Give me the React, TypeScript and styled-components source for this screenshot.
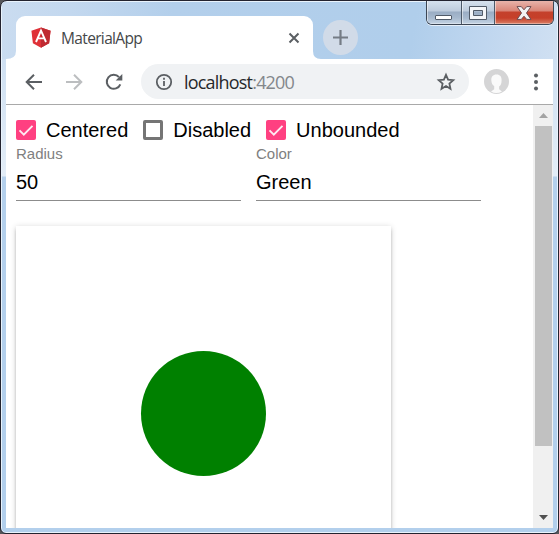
import React from 'react';
import styled, { createGlobalStyle } from 'styled-components';

const GlobalStyle = createGlobalStyle`
  * { box-sizing: border-box; }
  body { margin: 0; background: #55565a; overflow: hidden; }
  svg { display: block; flex: none; }
`;

const Window = styled.div`
  width: 559px;
  height: 534px;
  display: flex;
  flex-direction: column;
  position: relative;
  overflow: hidden;
  padding: 1px 5px 4px;
  border: 1px solid #23232f;
  border-radius: 7px 7px 6px 6px;
  box-shadow: inset 0 0 0 1px #e9f3fc;
  background: linear-gradient(180deg, #cfe0f2 0, #cfe0f2 60px, #e3edf7 175px, #b4d0ec 176px, #b2cfec 100%);
`;

const TabStrip = styled.header`
  height: 57px;
  flex: none;
  margin: 0 -4px;
  padding-top: 14px;
  display: flex;
  align-items: flex-start;
  background: linear-gradient(100deg, #cadcf0 0, #c3d8ef 70px, #b3cfeb 170px, #b0ceeb 410px, #bfd6ef 480px, #d0e0f2 100%);
`;

const TabFoot = styled.svg`
  margin-top: 35px;
`;

const Tab = styled.div`
  width: 297px;
  height: 43px;
  display: flex;
  align-items: center;
  padding: 0 13px 0 15px;
  border-radius: 9px 9px 0 0;
  background: #fff;
`;

const TabTitle = styled.span`
  flex: 1;
  margin-left: 10px;
  font: 15.5px/22px 'Open Sans', sans-serif;
  letter-spacing: -0.65px;
  color: #45474a;
`;

const NewTab = styled.div`
  width: 35px;
  height: 35px;
  margin: 4px 0 0 2px;
  border-radius: 50%;
  display: grid;
  place-items: center;
  background: #d1dbe8;
`;

const Captions = styled.div`
  position: absolute;
  top: 0;
  right: 4px;
  width: 128px;
  height: 24px;
  display: flex;
  border: 1px solid #3c4654;
  border-top: 0;
  border-radius: 0 0 6px 6px;
  box-shadow: 0 1px 0 #e7f0fa;
  overflow: hidden;
`;

const Caption = styled.div<{ $width: number; $close?: boolean }>`
  width: ${p => p.$width}px;
  flex: none;
  display: grid;
  place-items: center;
  padding-top: 1px;
  padding-right: ${p => (p.$close ? '1px' : '0')};
  border-right: ${p => (p.$close ? '0' : '1px solid #4c5969')};
  box-shadow: inset 1px 0 0 rgba(255, 255, 255, 0.5), inset 0 -1px 0 rgba(255, 255, 255, 0.35);
  background: ${p =>
    p.$close
      ? 'linear-gradient(#e8b3aa 0, #d98577 10px, #c4412c 11px, #c63f29 17px, #db8066 100%)'
      : 'linear-gradient(#d5e1ee 0, #bdcbdc 10px, #9aadc4 11px, #a7b9ce 17px, #c5d4e4 100%)'};
`;

const Toolbar = styled.div`
  height: 46px;
  flex: none;
  width: 547px;
  display: flex;
  align-items: center;
  padding: 0 7px 0 18px;
  background: #fff;
  border-bottom: 1px solid #a9a9a9;
`;

const NavButtons = styled.div`
  display: flex;
  gap: 20px;
`;

const Omnibox = styled.div`
  width: 328px;
  height: 35px;
  flex: none;
  margin-left: 17px;
  display: flex;
  align-items: center;
  padding: 0 13px 0 14px;
  border-radius: 18px;
  background: #f0f2f4;
`;

const Address = styled.span`
  flex: 1;
  margin-left: 11px;
  font: 18px/26px 'Open Sans', sans-serif;
  letter-spacing: -0.8px;
  color: #26282b;
`;

const Port = styled.span`
  color: #83878b;
`;

const ToolbarEnd = styled.div`
  margin-left: 15px;
  display: flex;
  align-items: center;
  gap: 17px;
`;

const Viewport = styled.div`
  width: 547px;
  height: 423px;
  display: flex;
  background: #fff;
  overflow: hidden;
`;

const Page = styled.main`
  flex: 1;
  padding: 15px 10px 0;
  overflow: hidden;
  font-family: 'Liberation Sans', Arial, sans-serif;
  color: #000;
`;

const Checks = styled.div`
  display: flex;
  gap: 15px;
`;

const Check = styled.label`
  display: flex;
  align-items: center;
  gap: 10px;
  height: 20px;
  font-size: 20px;
  line-height: 20px;
`;

const Box = styled.span<{ $checked?: boolean }>`
  width: 20px;
  height: 20px;
  border-radius: 2px;
  border: ${p => (p.$checked ? '0' : '3px solid #757575')};
  background: ${p => (p.$checked ? '#ff4081' : '#fff')};
`;

const Fields = styled.div`
  display: flex;
  gap: 15px;
  margin-top: 5px;
`;

const Field = styled.div`
  width: 225px;
  height: 56px;
  border-bottom: 1px solid #8c8c8c;
`;

const FieldLabel = styled.div`
  font-size: 15px;
  line-height: 17px;
  color: #808080;
`;

const FieldValue = styled.div`
  margin-top: 9px;
  font-size: 20px;
  line-height: 23px;
`;

const RippleCard = styled.section`
  width: 375px;
  height: 375px;
  margin-top: 25px;
  display: grid;
  place-items: center;
  box-shadow: 0 4px 4px -2px rgba(0, 0, 0, 0.2), 0 3px 3px rgba(0, 0, 0, 0.12), 0 1px 6px rgba(0, 0, 0, 0.18);
`;

const Ripple = styled.div`
  width: 125px;
  height: 125px;
  border-radius: 50%;
  background: green;
`;

const Scrollbar = styled.div`
  width: 20px;
  display: flex;
  flex-direction: column;
  align-items: center;
  background: #f0f0f0;
`;

const ScrollButton = styled.div`
  height: 21px;
  display: grid;
  place-items: center;
`;

const Thumb = styled.div`
  width: 17px;
  height: 320px;
  margin: 0 1px 0 2px;
  background: #c1c1c1;
`;

const Spacer = styled.div`
  flex: 1;
`;

const CheckOption = ({ label, checked }: { label: string; checked?: boolean }) => (
  <Check>
    <Box $checked={checked}>
      {checked && (
        <svg width="20" height="20" viewBox="0 0 20 20">
          <path d="M3.5 10.4 L7.8 14.6 L16.5 5.8" fill="none" stroke="#ffe9f0" strokeWidth="1.9" />
        </svg>
      )}
    </Box>
    {label}
  </Check>
);

const LabeledField = ({ label, value }: { label: string; value: string }) => (
  <Field>
    <FieldLabel>{label}</FieldLabel>
    <FieldValue>{value}</FieldValue>
  </Field>
);

const AngularLogo = () => (
  <svg width="20" height="21" viewBox="0 0 20 21">
    <path d="M10 0.4 L19.6 3.8 L18.1 16.2 L10 20.7 L1.9 16.2 L0.4 3.8Z" fill="#df3138" />
    <path d="M10 0.4 L19.6 3.8 L18.1 16.2 L10 20.7Z" fill="#bf2a31" />
    <path d="M5 15 L10 3.7 L15 15 M6.8 11.4 H13.2" fill="none" stroke="#fff" strokeWidth="1.9" />
  </svg>
);

const Arrow = ({ forward }: { forward?: boolean }) => (
  <svg width="20" height="20" viewBox="0 0 20 20">
    <path
      d={forward ? 'M2 10 H17 M10 2.7 L17.3 10 L10 17.3' : 'M18 10 H3 M10 2.7 L2.7 10 L10 17.3'}
      fill="none"
      stroke={forward ? '#bcbec0' : '#5b5f63'}
      strokeWidth="2"
    />
  </svg>
);

const Reload = () => (
  <svg width="20" height="20" viewBox="0 0 20 20">
    <path d="M16.3 12.3 A7 7 0 1 1 15 5.1" fill="none" stroke="#5b5f63" strokeWidth="2" />
    <path d="M18.3 2 V8.6 H11.7Z" fill="#5b5f63" />
  </svg>
);

export default function App() {
  return (
    <>
      <GlobalStyle />
      <Window>
        <TabStrip>
          <TabFoot width="14" height="8" viewBox="0 0 14 8">
            <path d="M14 0 Q14 8 4 8 H14Z" fill="#fff" />
          </TabFoot>
          <Tab>
            <AngularLogo />
            <TabTitle>MaterialApp</TabTitle>
            <svg width="12" height="12" viewBox="0 0 12 12">
              <path d="M1.5 1.5 L10.5 10.5 M10.5 1.5 L1.5 10.5" stroke="#5b5f63" strokeWidth="2" />
            </svg>
          </Tab>
          <TabFoot width="8" height="8" viewBox="0 0 8 8">
            <path d="M0 0 Q0 8 8 8 H0Z" fill="#fff" />
          </TabFoot>
          <NewTab>
            <svg width="15" height="15" viewBox="0 0 15 15">
              <path d="M7.5 0 V15 M0 7.5 H15" stroke="#757c85" strokeWidth="2.2" />
            </svg>
          </NewTab>
        </TabStrip>
        <Captions>
          <Caption $width={35}>
            <svg width="18" height="15" viewBox="0 0 18 15">
              <rect x="0.5" y="9.5" width="16" height="4" rx="0.5" fill="#fff" stroke="#505a68" />
            </svg>
          </Caption>
          <Caption $width={33}>
            <svg width="18" height="15" viewBox="0 0 18 15">
              <path d="M0.5 0.5 H17.5 V13.5 H0.5Z M4.5 4.5 V9.5 H13.5 V4.5Z" fill="#f4f6f9" fillRule="evenodd" stroke="#505a68" />
            </svg>
          </Caption>
          <Caption $width={59} $close>
            <svg width="16" height="14" viewBox="0 0 16 14">
              <path d="M1 0.6 H5.3 L8 3.8 L10.7 0.6 H15 L10.5 7 L15 13.4 H10.7 L8 10.2 L5.3 13.4 H1 L5.5 7Z" fill="#f3f3f4" stroke="#6b4b50" />
            </svg>
          </Caption>
        </Captions>
        <Toolbar>
          <NavButtons>
            <Arrow />
            <Arrow forward />
            <Reload />
          </NavButtons>
          <Omnibox>
            <svg width="18" height="18" viewBox="0 0 18 18">
              <circle cx="9" cy="9" r="7.2" fill="none" stroke="#5b5f63" strokeWidth="1.8" />
              <path d="M9 8 V13 M9 4.8 V6.7" stroke="#5b5f63" strokeWidth="1.8" />
            </svg>
            <Address>
              localhost<Port>:4200</Port>
            </Address>
            <svg width="20" height="20" viewBox="0 0 20 20">
              <path
                d="M10 2.8 L12.1 7.6 L17.3 8.1 L13.4 11.6 L14.5 16.8 L10 14.1 L5.5 16.8 L6.6 11.6 L2.7 8.1 L7.9 7.6Z"
                fill="none"
                stroke="#5b5f63"
                strokeWidth="1.8"
              />
            </svg>
          </Omnibox>
          <ToolbarEnd>
            <svg width="25" height="25" viewBox="0 0 25 25">
              <circle cx="12.5" cy="12.5" r="12.5" fill="#d5d5d6" />
              <path
                d="M12.5 5.5 C8.8 5.5 7.3 7.8 7.3 11 C7.4 14.4 8.6 16.2 10.2 17 V20.3 L7 22.5 Q12 25.5 18 22.5 L15.1 20.3 V17.5 C17 16.6 17.6 14 17.6 11 C17.6 7.8 16.2 5.5 12.5 5.5Z"
                fill="#fafafa"
              />
            </svg>
            <svg width="20" height="20" viewBox="0 0 20 20">
              <g fill="#5b5f63">
                <circle cx="10" cy="3.5" r="2" />
                <circle cx="10" cy="10" r="2" />
                <circle cx="10" cy="16.5" r="2" />
              </g>
            </svg>
          </ToolbarEnd>
        </Toolbar>
        <Viewport>
          <Page>
            <Checks>
              <CheckOption label="Centered" checked />
              <CheckOption label="Disabled" />
              <CheckOption label="Unbounded" checked />
            </Checks>
            <Fields>
              <LabeledField label="Radius" value="50" />
              <LabeledField label="Color" value="Green" />
            </Fields>
            <RippleCard>
              <Ripple />
            </RippleCard>
          </Page>
          <Scrollbar>
            <ScrollButton>
              <svg width="9" height="5" viewBox="0 0 9 5">
                <path d="M4.5 0 L9 5 H0Z" fill="#a3a3a3" />
              </svg>
            </ScrollButton>
            <Thumb />
            <Spacer />
            <ScrollButton>
              <svg width="9" height="5" viewBox="0 0 9 5">
                <path d="M0 0 H9 L4.5 5Z" fill="#505050" />
              </svg>
            </ScrollButton>
          </Scrollbar>
        </Viewport>
      </Window>
    </>
  );
}
